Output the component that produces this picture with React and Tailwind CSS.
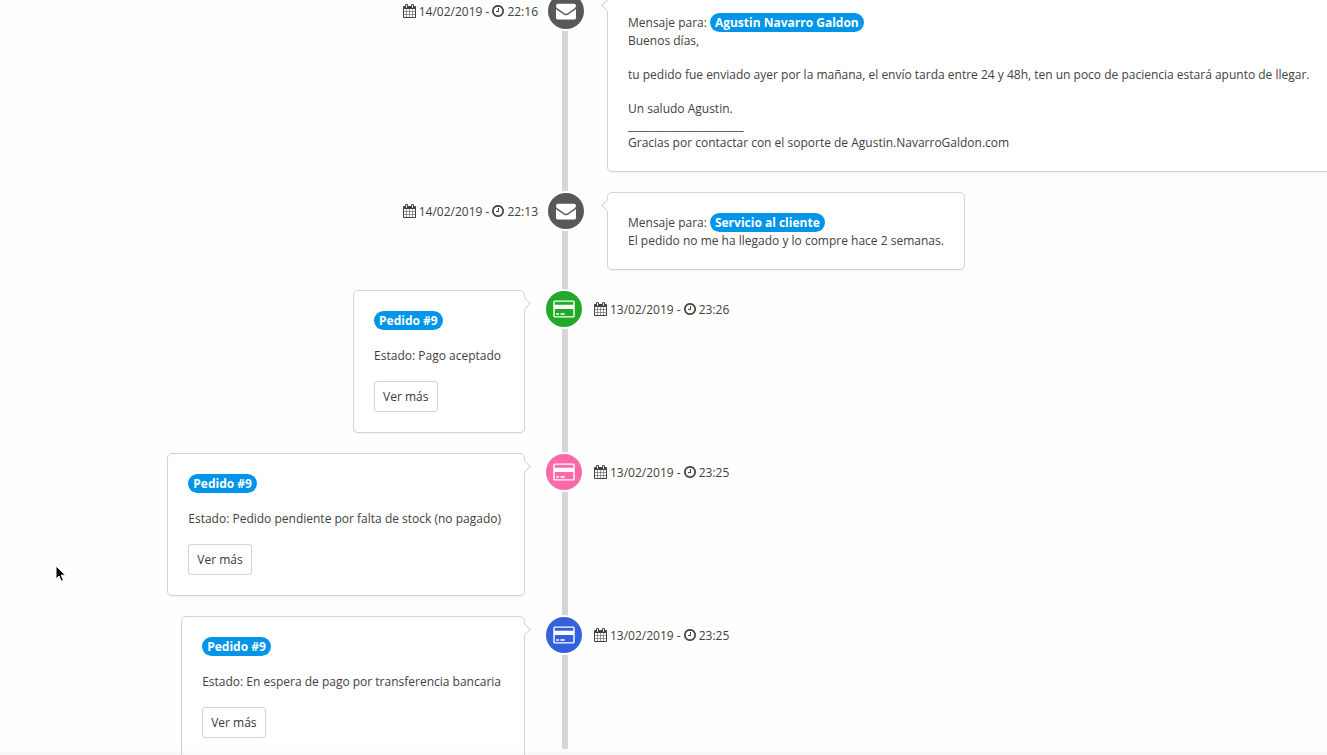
import clsx from 'clsx';

const messages = [
  {
    date: '14/02/2019',
    time: '22:16',
    to: 'Agustin Navarro Galdon',
    lines: [
      'Buenos días,',
      '',
      'tu pedido fue enviado ayer por la mañana, el envío tarda entre 24 y 48h, ten un poco de paciencia estará apunto de llegar.',
      '',
      'Un saludo Agustin.',
      '______________________',
      'Gracias por contactar con el soporte de Agustin.NavarroGaldon.com'
    ]
  },
  {
    date: '14/02/2019',
    time: '22:13',
    to: 'Servicio al cliente',
    lines: ['El pedido no me ha llegado y lo compre hace 2 semanas.']
  }
];

const orders = [
  { date: '13/02/2019', time: '23:26', order: 9, status: 'Pago aceptado', color: 'bg-[#21a928]' },
  {
    date: '13/02/2019',
    time: '23:25',
    order: 9,
    status: 'Pedido pendiente por falta de stock (no pagado)',
    color: 'bg-[#ff69a9]'
  },
  {
    date: '13/02/2019',
    time: '23:25',
    order: 9,
    status: 'En espera de pago por transferencia bancaria',
    color: 'bg-[#3560dc]'
  }
];

const CalendarIcon = () => (
  <svg viewBox="0 0 1664 1792" className="h-[14px] w-[13px] shrink-0" fill="currentColor" aria-hidden="true">
    <path d="M128 1664h288v-288h-288v288zM480 1664h320v-288h-320v288zM128 1312h288v-320h-288v320zM480 1312h320v-320h-320v320zM128 928h288v-288h-288v288zM864 1664h320v-288h-320v288zM480 928h320v-288h-320v288zM1248 1664h288v-288h-288v288zM864 1312h320v-320h-320v320zM512 448v-288q0-13-9.500-22.500t-22.500-9.500h-64q-13 0-22.500 9.500t-9.500 22.500v288q0 13 9.500 22.500t22.500 9.500h64q13 0 22.500-9.500t9.500-22.500zM1248 1312h288v-320h-288v320zM864 928h320v-288h-320v288zM1248 928h288v-288h-288v288zM1280 448v-288q0-13-9.500-22.500t-22.500-9.500h-64q-13 0-22.500 9.500t-9.500 22.500v288q0 13 9.500 22.500t22.500 9.500h64q13 0 22.500-9.500t9.500-22.500zM1664 384v1280q0 52-38 90t-90 38h-1408q-52 0-90-38t-38-90v-1280q0-52 38-90t90-38h128v-96q0-66 47-113t113-47h64q66 0 113 47t47 113v96h384v-96q0-66 47-113t113-47h64q66 0 113 47t47 113v96h128q52 0 90 38t38 90z" />
  </svg>
);

const ClockIcon = () => (
  <svg viewBox="0 0 1536 1792" className="h-[14px] w-3 shrink-0" fill="currentColor" aria-hidden="true">
    <path d="M896 544v448q0 14-9 23t-23 9h-320q-14 0-23-9t-9-23v-64q0-14 9-23t23-9h224v-352q0-14 9-23t23-9h64q14 0 23 9t9 23zM1312 896q0-148-73-273t-198-198-273-73-273 73-198 198-73 273 73 273 198 198 273 73 273-73 198-198 73-273zM1536 896q0 209-103 385.500t-279.500 279.500-385.500 103-385.500-103-279.500-279.500-103-385.500 103-385.500 279.500-279.500 385.500-103 385.500 103 279.500 279.500 103 385.500z" />
  </svg>
);

const EnvelopeIcon = () => (
  <svg viewBox="0 0 1792 1792" className="size-5" fill="currentColor" aria-hidden="true">
    <path d="M1792 710v794q0 66-47 113t-113 47h-1472q-66 0-113-47t-47-113v-794q44 49 101 87 362 246 497 345 57 42 92.500 65.500t94.500 48 110 24.500h2q51 0 110-24.500t94.500-48 92.500-65.500q170-123 498-345 57-39 100-87zM1792 416q0 79-49 151t-122 123q-376 261-468 325-10 7-42.500 31t-54 38.500-52 32.500-57.500 27-50 9h-2q-23 0-50-9t-57.500-27-52-32.500-54-38.500-42.500-31q-91-64-262-182.500t-205-142.500q-62-42-117-115.500t-55-136.500q0-78 41.500-130t118.500-52h1472q65 0 112.500 47t47.500 113z" />
  </svg>
);

const CardIcon = () => (
  <svg viewBox="0 0 1920 1792" className="h-5 w-[22px]" fill="currentColor" aria-hidden="true">
    <path d="M1760 128q66 0 113 47t47 113v1216q0 66-47 113t-113 47h-1600q-66 0-113-47t-47-113v-1216q0-66 47-113t113-47h1600zM160 256q-13 0-22.500 9.500t-9.500 22.500v224h1664v-224q0-13-9.500-22.500t-22.500-9.500h-1600zM1760 1536q13 0 22.500-9.500t9.500-22.500v-608h-1664v608q0 13 9.500 22.500t22.500 9.500h1600zM256 1408v-128h256v128h-256zM640 1408v-128h384v128h-384z" />
  </svg>
);

const Stamp = ({ date, time, className }) => (
  <div className={clsx('mt-px flex h-9 items-center gap-[3px] whitespace-nowrap', className)}>
    <CalendarIcon />
    <span>{date} -</span>
    <ClockIcon />
    <time>{time}</time>
  </div>
);

const Dot = ({ color, children }) => (
  <div className={clsx('mt-px flex size-9 items-center justify-center rounded-full text-white ring-2 ring-white', color)}>
    {children}
  </div>
);

const Badge = ({ children }) => (
  <span className="inline-flex h-[19px] items-center rounded-full bg-[#0095e9] px-[5px] font-bold text-white">
    {children}
  </span>
);

// Bordered box with a small arrow pointing at the timeline
const Panel = ({ arrow, className, children }) => (
  <div className={clsx('relative rounded-[5px] border border-[#d4d4d4] bg-white p-5 shadow-[0_1px_1px_rgba(0,0,0,0.05)]', className)}>
    <span
      className={clsx(
        'absolute top-2 size-[9px] rotate-45 border-[#d4d4d4] bg-white',
        arrow === 'left' ? '-left-[5px] border-b border-l' : '-right-[5px] border-t border-r'
      )}
    />
    {children}
  </div>
);

const MessageItem = ({ date, time, to, lines }) => (
  <li className="grid grid-cols-[minmax(0,548fr)_36px_minmax(0,743fr)]">
    <Stamp date={date} time={time} className="justify-end pr-[10px]" />
    <Dot color="bg-[#585858]">
      <EnvelopeIcon />
    </Dot>
    <div className="pl-[23px]">
      <Panel arrow="left" className="w-max">
        <p className="flex h-[19px] items-center gap-[3px]">
          Mensaje para: <Badge>{to}</Badge>
        </p>
        {lines.map((line, i) => (
          <p key={i} className="h-[17px] whitespace-nowrap">{line}</p>
        ))}
      </Panel>
    </div>
  </li>
);

const OrderItem = ({ date, time, order, status, color }) => (
  <li className="grid grid-cols-[minmax(0,546fr)_36px_minmax(0,745fr)]">
    <div className="flex justify-end pr-[21px]">
      <Panel arrow="right" className="flex flex-col items-start gap-[17px] pr-[23px]">
        <Badge>Pedido #{order}</Badge>
        <p>Estado: {status}</p>
        <button type="button" className="h-[31px] rounded-[3px] border border-[#d4d4d4] bg-white px-2 text-[#363a41]">
          Ver más
        </button>
      </Panel>
    </div>
    <Dot color={color}>
      <CardIcon />
    </Dot>
    <Stamp date={date} time={time} className="pl-3" />
  </li>
);

const App = () => {
  return (
    <main className="relative h-screen overflow-hidden bg-[#fefefe] font-['Open_Sans',sans-serif] text-[12px] leading-[17px] text-[#414141]">
      {/* Timeline axis */}
      <div className="absolute inset-x-0 top-0 bottom-1.5 grid grid-cols-[562fr_6px_759fr]">
        <div className="col-start-2 bg-[#d6d6d6]" />
      </div>

      <ul className="relative -mt-2 flex flex-col gap-5">
        {messages.map((message) => (
          <MessageItem key={message.time} {...message} />
        ))}
        {orders.map((order) => (
          <OrderItem key={order.status} {...order} />
        ))}
      </ul>

      <div className="absolute inset-x-0 bottom-0 h-1.5 bg-linear-to-b from-transparent to-black/3" />

      {/* Pointer */}
      <svg viewBox="0 0 12 18" className="absolute top-[565px] left-[55px] h-[18px] w-3" aria-hidden="true">
        <path d="M1 1v13l3-3 2.200 5.200 2.200-1-2.200-5h4.300z" fill="#000" stroke="#fff" strokeWidth="1" />
      </svg>
    </main>
  );
};

export default App;
